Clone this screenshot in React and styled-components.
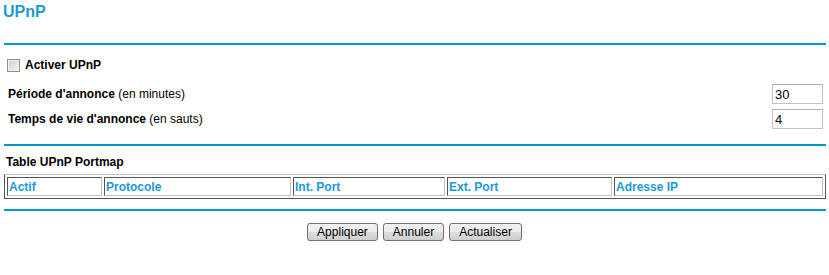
import React from "react";
import styled, { createGlobalStyle } from "styled-components";

const GlobalStyle = createGlobalStyle`
  html, body {
    margin: 0;
    padding: 0;
    background: #ffffff;
  }
  body {
    font-family: Arial, "Liberation Sans", Helvetica, sans-serif;
    font-size: 12px;
    color: #000;
  }
`;

const columns = [
  { label: "Actif", width: 95 },
  { label: "Protocole", width: 187 },
  { label: "Int. Port", width: 152 },
  { label: "Ext. Port", width: 165 },
  { label: "Adresse IP", width: 209 },
];

const App = () => {
  return (
    <Page>
      <GlobalStyle />
      <Header>
        <Title>UPnP</Title>
      </Header>
      <Rule />

      <CheckRow>
        <Check type="checkbox" id="upnp" />
        <CheckLabel htmlFor="upnp">Activer UPnP</CheckLabel>
      </CheckRow>

      <Fields>
        <FieldRow>
          <Label>
            <b>Période d'annonce</b> (en minutes)
          </Label>
          <TextInput defaultValue="30" />
        </FieldRow>
        <FieldRow>
          <Label>
            <b>Temps de vie d'annonce</b> (en sauts)
          </Label>
          <TextInput defaultValue="4" />
        </FieldRow>
      </Fields>

      <Rule $top={15} />

      <SectionTitle>Table UPnP Portmap</SectionTitle>
      <PortTable $cols={columns.map((c) => `${c.width}px`).join(" ")}>
        {columns.map((c) => (
          <HeadCell key={c.label}>{c.label}</HeadCell>
        ))}
      </PortTable>

      <Rule $top={10} />

      <Buttons>
        <Button>Appliquer</Button>
        <Button>Annuler</Button>
        <Button>Actualiser</Button>
      </Buttons>
    </Page>
  );
};

const Page = styled.div`
  width: 829px;
  height: 275px;
  overflow: hidden;
`;

const Header = styled.div`
  height: 43px;
  padding: 3px 0 0 3px;
  box-sizing: border-box;
`;

const Title = styled.h1`
  margin: 0;
  font-size: 16px;
  line-height: 18px;
  font-weight: bold;
  color: #1a9ad6;
`;

const Rule = styled.div`
  margin: ${(p) => p.$top || 0}px 0 0 4px;
  width: 822px;
  height: 2px;
  background: #0099cc;
`;

const CheckRow = styled.div`
  display: flex;
  align-items: center;
  height: 14px;
  margin-top: 13px;
  padding-left: 7px;
`;

const Check = styled.input`
  appearance: none;
  box-sizing: border-box;
  width: 13px;
  height: 13px;
  margin: 0 5px 0 0;
  border: 1px solid #8e8f8f;
  box-shadow: inset 0 0 0 1px #f4f4f4;
  background: linear-gradient(135deg, #cbcbcb 0%, #e6e6e6 60%, #f4f4f4 100%);
`;

const CheckLabel = styled.label`
  font-weight: bold;
  font-size: 12px;
`;

const Fields = styled.div`
  display: flex;
  flex-direction: column;
  gap: 5px;
  margin-top: 12px;
`;

const FieldRow = styled.div`
  display: flex;
  align-items: center;
  justify-content: space-between;
  height: 20px;
  padding: 0 6px 0 8px;
`;

const Label = styled.span`
  font-size: 12px;
`;

const TextInput = styled.input`
  box-sizing: border-box;
  width: 51px;
  height: 20px;
  margin: 0;
  padding: 1px 2px;
  border: 1px solid #c3c3c3;
  border-top-color: #abadb3;
  font-family: Arial, "Liberation Sans", sans-serif;
  font-size: 13px;
  color: #000;
  outline: none;
`;

const SectionTitle = styled.div`
  margin: 9px 0 0 6px;
  font-weight: bold;
  font-size: 12px;
  line-height: 14px;
`;

const PortTable = styled.div`
  display: grid;
  grid-template-columns: ${(p) => p.$cols};
  gap: 2px;
  padding: 2px;
  margin: 5px 0 0 4px;
  width: 822px;
  box-sizing: border-box;
  border: 1px solid #555;
  border-top-color: #c0c0c0;
`;

const HeadCell = styled.div`
  box-sizing: border-box;
  height: 19px;
  display: flex;
  align-items: center;
  padding-left: 1px;
  border: 1px solid #c0c0c0;
  border-top-color: #555;
  border-left-color: #555;
  color: #1a9ad6;
  font-weight: bold;
  font-size: 12px;
`;

const Buttons = styled.div`
  display: flex;
  justify-content: center;
  gap: 5px;
  margin-top: 12px;
`;

const Button = styled.button`
  height: 18px;
  padding: 0 9px;
  border: 1px solid #707070;
  border-radius: 3px;
  background: linear-gradient(
    to bottom,
    #f2f2f2 0%,
    #ebebeb 50%,
    #dddddd 51%,
    #cfcfcf 100%
  );
  font-family: Arial, "Liberation Sans", sans-serif;
  font-size: 12px;
  line-height: 16px;
  color: #000;
  cursor: pointer;
`;

export default App;
